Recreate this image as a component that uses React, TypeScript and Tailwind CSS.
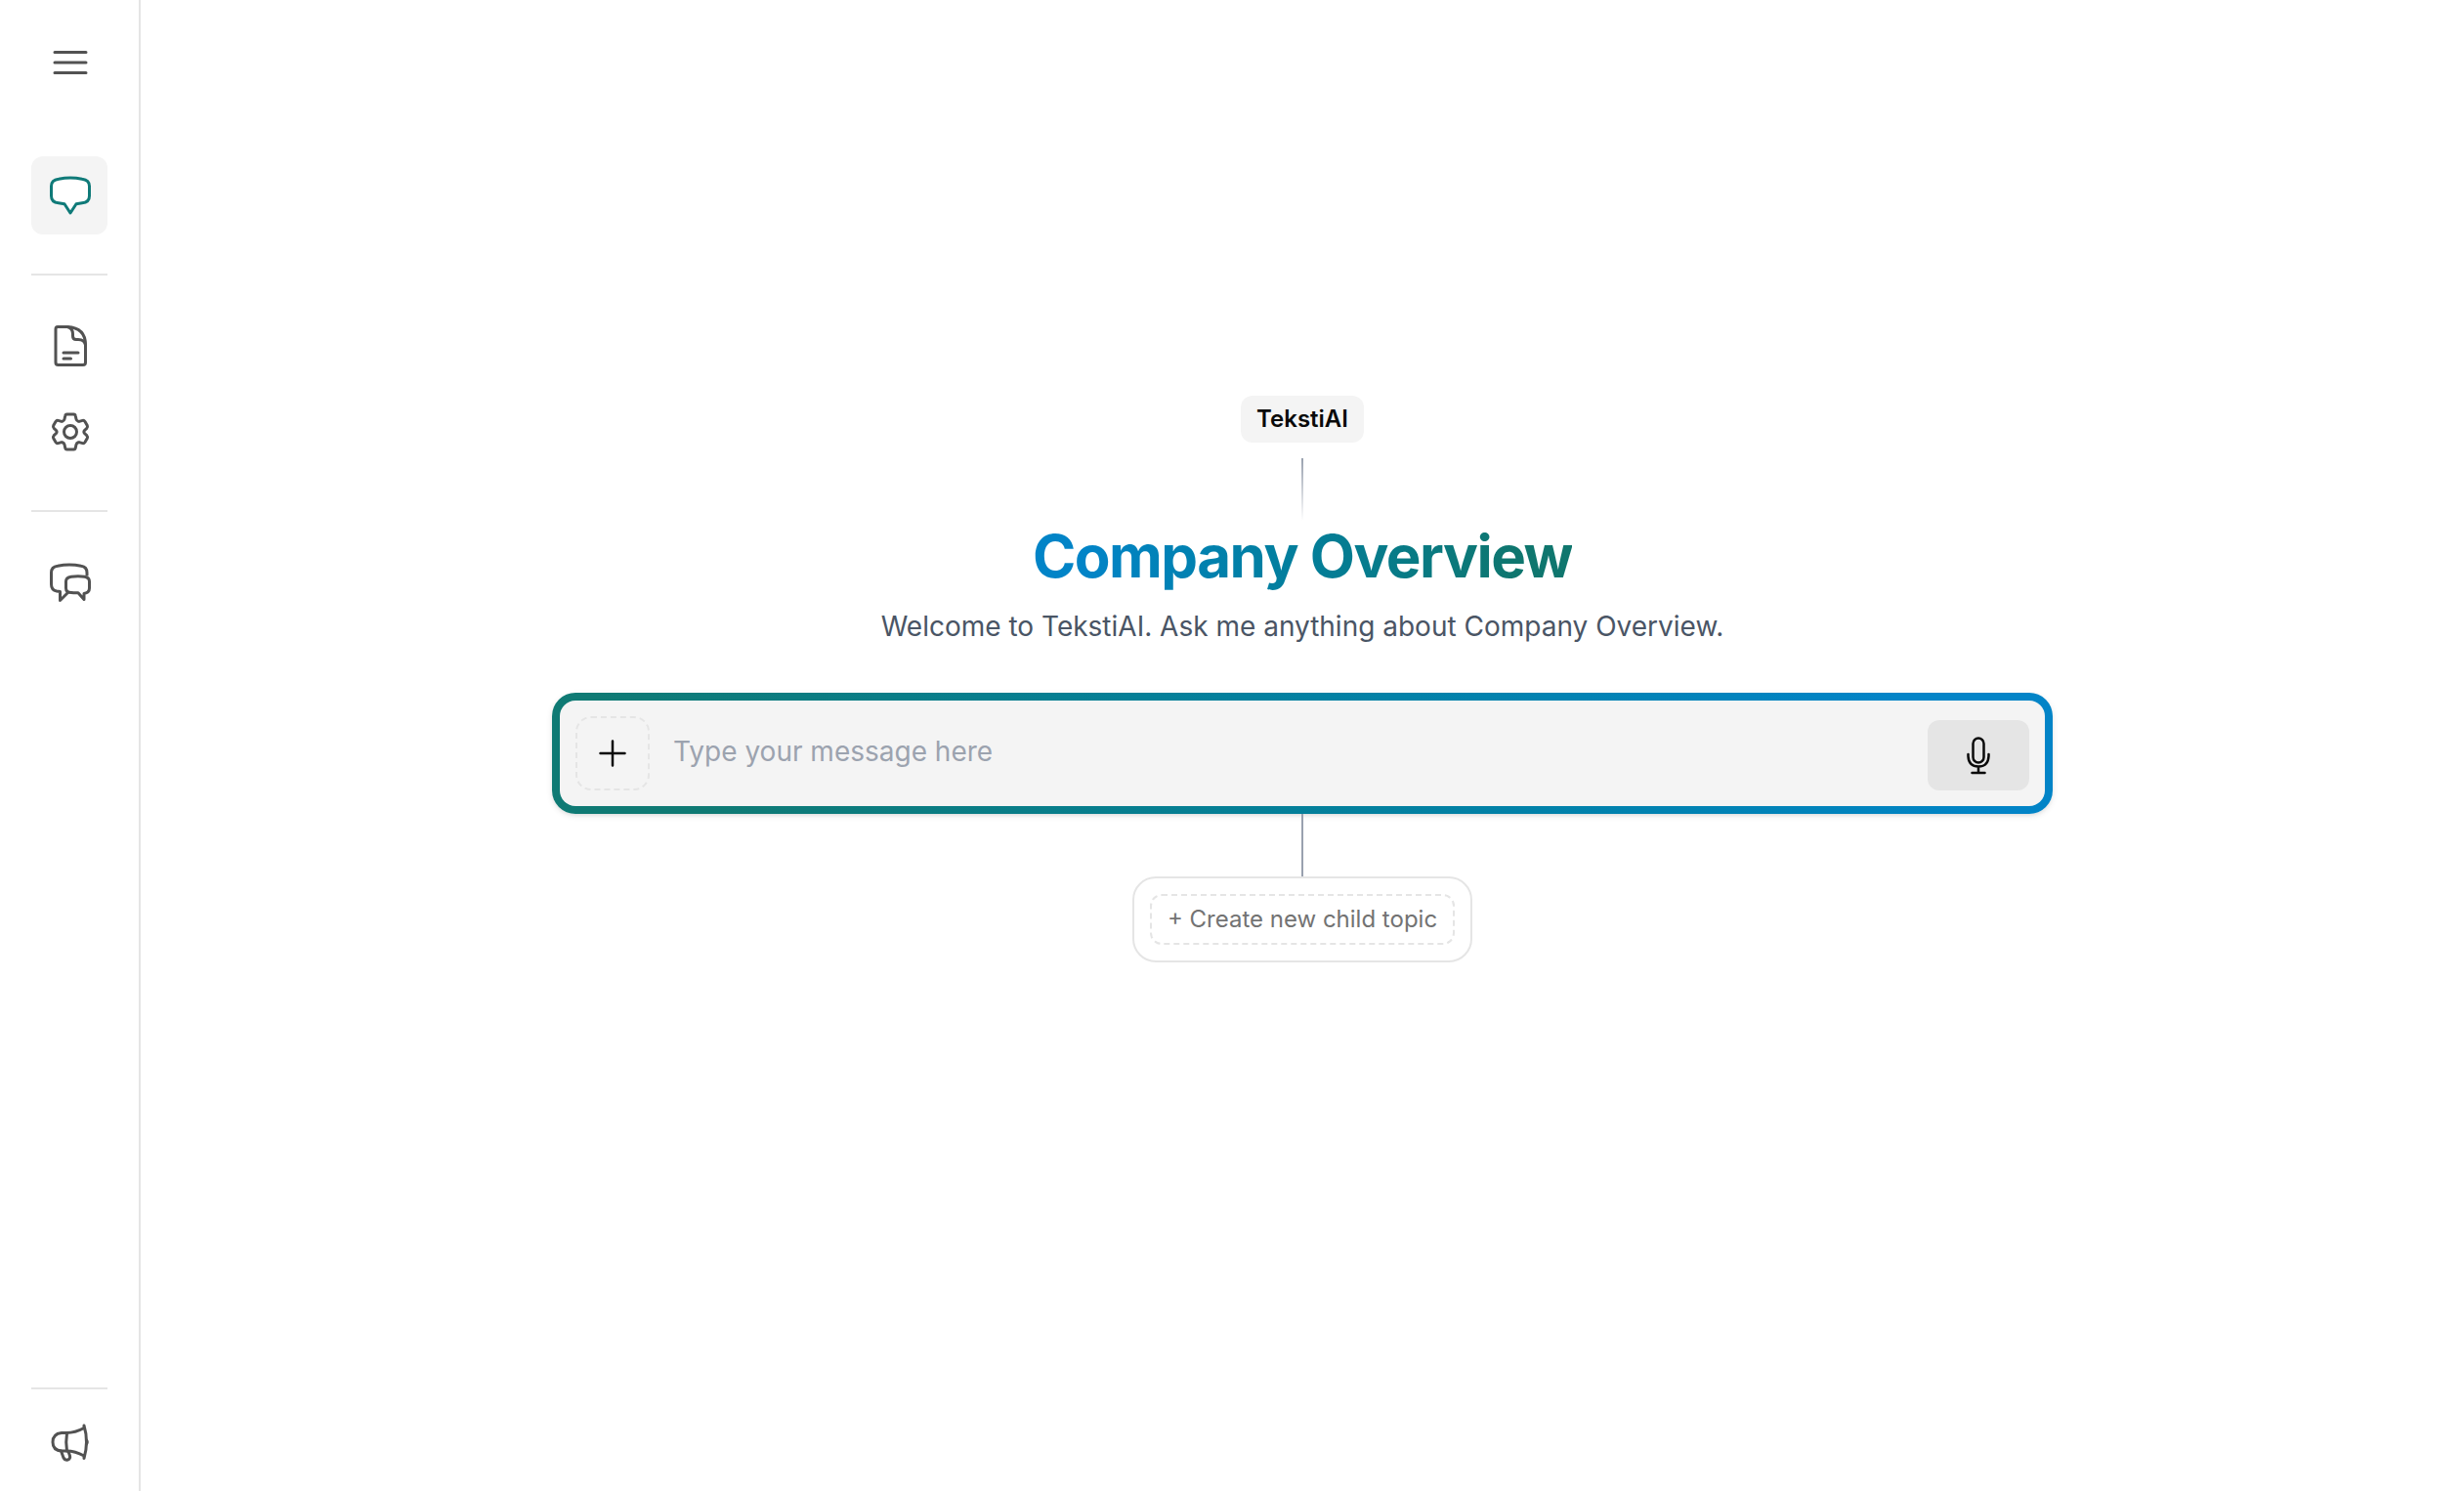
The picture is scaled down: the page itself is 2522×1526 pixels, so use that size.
import { useState } from "react";

const iconClass = "h-12 w-12";

const MenuIcon = () => (
  <svg className={iconClass} viewBox="0 0 48 48" fill="none" stroke="currentColor" strokeWidth="3" strokeLinecap="round">
    <path d="M8 13.5H40M8 24H40M8 34.5H40" />
  </svg>
);

const ChatIcon = () => (
  <svg className={iconClass} viewBox="0 0 48 48" fill="white" stroke="currentColor" strokeWidth="3" strokeLinejoin="round">
    <path d="M12 7.2Q24 4.6 36 7.2Q43.5 8.2 43.5 14.5V24.5Q43.5 31.2 36 31.8L30 32.8L24 42L18 32.8L12 31.8Q4.5 31.2 4.5 24.5V14.5Q4.5 8.2 12 7.2Z" />
  </svg>
);

const FileIcon = () => (
  <svg className={iconClass} viewBox="0 0 48 48" fill="none" stroke="currentColor" strokeWidth="3" strokeLinecap="round" strokeLinejoin="round">
    <path d="M11 4.5H21Q39.5 5.5 39.5 23V41Q39.5 43.5 37 43.5H11.5Q9 43.5 9 41V7Q9 4.5 11 4.5Z" />
    <path d="M21 4.5Q26.5 6 26.5 12V14Q26.5 17.5 30 17.5H32Q38.5 17.5 39.5 23" />
    <path d="M17 31H32M17 37H24.5" />
  </svg>
);

const SettingsIcon = () => (
  <svg className={iconClass} viewBox="0 0 48 48" fill="none" stroke="currentColor" strokeWidth="3" strokeLinejoin="round">
    <path d="M20.5 6H27.5Q29 6 29.3 7.7L30 11Q30.4 12.7 32.2 13.2L33 13.4L36.5 12.4Q38 12 39 13.5L41.3 17.5Q42 19 40.8 20.3L38.5 22.5Q37.3 24 38.5 25.5L40.8 27.7Q42 29 41.3 30.5L39 34.5Q38 36 36.5 35.6L33 34.6L32.2 34.8Q30.4 35.3 30 37L29.3 40.3Q29 42 27.5 42H20.5Q19 42 18.7 40.3L18 37Q17.6 35.3 15.8 34.8L15 34.6L11.5 35.6Q10 36 9 34.5L6.7 30.5Q6 29 7.2 27.7L9.5 25.5Q10.7 24 9.5 22.5L7.2 20.3Q6 19 6.7 17.5L9 13.5Q10 12 11.5 12.4L15 13.4L15.8 13.2Q17.6 12.7 18 11L18.7 7.7Q19 6 20.5 6Z" />
    <circle cx="24" cy="24" r="6.5" />
  </svg>
);

const ChatsIcon = () => (
  <svg className={iconClass} viewBox="0 0 48 48" fill="none" stroke="currentColor" strokeWidth="3" strokeLinejoin="round">
    <path d="M41 17.5V14Q41 8 35 7.2Q23 5 11 7.2Q4.5 8 4.5 14V26Q4.5 32 10 33L13.5 33.5V42.5L21.5 34.5" />
    <path d="M25 18.2Q32 17.2 38.5 18.2Q43.5 19 43.5 23V30Q43.5 34.5 38 35.5V41.5L32 34.8Q28 35 25 34.5Q19.500 34.500 19.500 30V23Q19.500 19 25 18.200Z" />
  </svg>
);

const MegaphoneIcon = () => (
  <svg className={iconClass} viewBox="0 0 48 48" fill="none" stroke="currentColor" strokeWidth="3" strokeLinecap="round" strokeLinejoin="round">
    <path d="M38 7V9.5Q29 14.5 20 14.5H15Q6 15.500 6 24Q6 32.500 15 33H20Q29 33 38 38V40.500Q40.500 32 40.500 24Q40.500 15 38 7Z" />
    <path d="M20.500 15Q19 24 20.500 33M40.500 22Q42 24 40.500 26" />
    <path d="M14.500 33L17 40Q18.500 43 21.500 42Q24.300 41 23.500 38L22 33.500" />
  </svg>
);

const NavButton = ({
  label,
  active = false,
  children,
}: {
  label: string;
  active?: boolean;
  children: React.ReactNode;
}) => (
  <button
    type="button"
    aria-label={label}
    className={
      active
        ? "flex h-20 w-full items-center justify-center rounded-xl bg-[#f4f4f4] pl-0.5 text-[#0f7a78]"
        : "flex h-20 w-full items-center justify-center rounded-xl pl-0.5 text-[#525252]"
    }
  >
    {children}
  </button>
);

const Divider = () => <hr className="my-10 border-t-2 border-[#e5e5e5]" />;

const Sidebar = () => (
  <nav className="flex w-36 shrink-0 flex-col border-r-2 border-[#e5e5e5] px-8">
    <div className="mt-6 mb-14">
      <NavButton label="Menu">
        <MenuIcon />
      </NavButton>
    </div>
    <NavButton label="Chat" active>
      <ChatIcon />
    </NavButton>
    <Divider />
    <div className="-mt-2 flex flex-col gap-2">
      <NavButton label="Documents">
        <FileIcon />
      </NavButton>
      <NavButton label="Settings">
        <SettingsIcon />
      </NavButton>
    </div>
    <Divider />
    <div className="-mt-2">
      <NavButton label="Conversations">
        <ChatsIcon />
      </NavButton>
    </div>
    <div className="mt-auto mb-2.5 flex flex-col gap-3.5">
      <hr className="border-t-2 border-[#e5e5e5]" />
      <NavButton label="Announcements">
        <MegaphoneIcon />
      </NavButton>
    </div>
  </nav>
);

const MessageForm = () => {
  const [message, setMessage] = useState("");

  return (
    <form
      onSubmit={(e) => e.preventDefault()}
      className="w-full max-w-[1536px] rounded-3xl bg-linear-45 from-[#0f7a74] from-10% to-[#0284c7] to-90% p-2 shadow-[0_2px_6px_rgba(0,0,0,0.1),0_2px_4px_-2px_rgba(0,0,0,0.1)]"
    >
      <div className="flex items-end rounded-2xl bg-[#f4f4f4] p-4">
        <button
          type="button"
          aria-label="Add attachment"
          className="flex h-[76px] w-[76px] shrink-0 items-center justify-center rounded-2xl border-2 border-dashed border-[#e5e5e5] text-[#0a0a0a]"
        >
          <svg className="h-8 w-8" viewBox="0 0 32 32" fill="none" stroke="currentColor" strokeWidth="2.5" strokeLinecap="round">
            <path d="M16 3.5V28.5M3.5 16H28.5" />
          </svg>
        </button>
        <input
          type="text"
          aria-label="Message"
          placeholder="Type your message here"
          value={message}
          onChange={(e) => setMessage(e.target.value)}
          className="h-[72px] min-w-0 flex-1 self-start bg-transparent px-6 text-[28px] text-gray-900 placeholder:text-[#9ca3af] focus:outline-none"
        />
        <button
          type="button"
          aria-label="Record voice message"
          className="flex h-[72px] w-[104px] shrink-0 items-center justify-center rounded-xl bg-[#e5e5e5] text-[#0a0a0a]"
        >
          <svg className="h-10 w-10" viewBox="0 0 40 40" fill="none" stroke="currentColor" strokeWidth="2.5" strokeLinecap="round">
            <rect x="14.5" y="2.5" width="11" height="25" rx="5.5" />
            <path d="M9.5 19V21Q10 31.5 20 31.5Q30 31.5 30.5 21V19M20 31.5V37.5M13.5 38H26.5" />
          </svg>
        </button>
      </div>
    </form>
  );
};

const App = () => {
  return (
    <div className="flex min-h-screen bg-white font-['Inter',sans-serif]">
      <Sidebar />
      <main className="flex flex-1 flex-col items-center justify-center px-8 pb-[136px]">
        <div className="flex h-12 items-center rounded-xl bg-[#f4f4f4] px-4 text-2xl font-semibold text-[#0a0a0a]">
          TekstiAI
        </div>
        <div className="mt-4 h-16 w-0.5 bg-linear-to-b from-gray-400 to-transparent" />
        <h1 className="bg-linear-to-r from-[#0284c7] from-10% to-[#0f766e] to-90% bg-clip-text text-6xl leading-[72px] font-bold tracking-tight text-transparent">
          Company Overview
        </h1>
        <p className="mt-4 mb-12 text-[28px] leading-10 text-gray-600">
          Welcome to TekstiAI. Ask me anything about Company Overview.
        </p>
        <MessageForm />
        <div className="h-16 w-0.5 bg-gray-400" />
        <div className="rounded-3xl border-2 border-[#e5e5e5] p-4">
          <button
            type="button"
            className="flex h-[52px] items-center rounded-xl border-2 border-dashed border-[#e5e5e5] px-4 text-2xl text-[#737373]"
          >
            + Create new child topic
          </button>
        </div>
      </main>
    </div>
  );
};

export default App;
